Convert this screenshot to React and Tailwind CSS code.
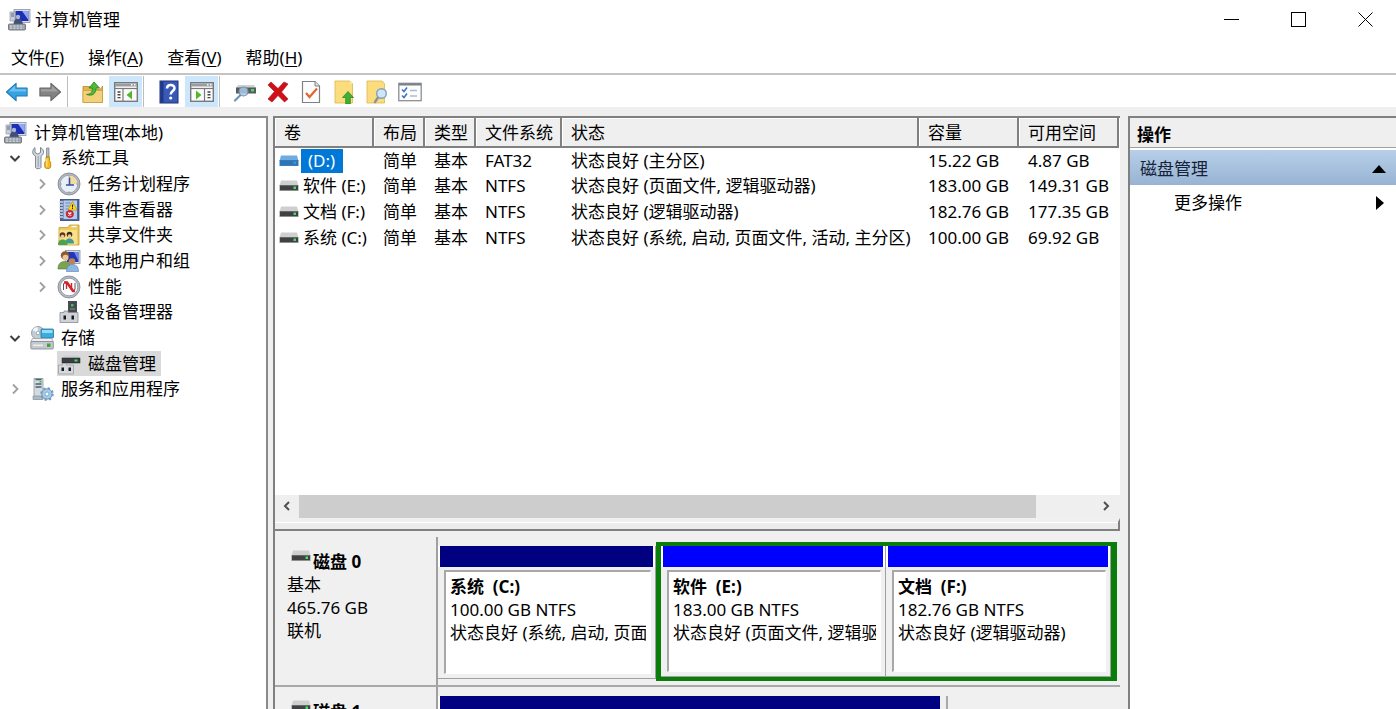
import { useState } from 'react';
import clsx from 'clsx';

/* ---------- icons ---------- */

const ComputerIcon = ({ size = 24 }) => (
  <svg width={size} height={size} viewBox="0 0 24 24" aria-hidden="true">
    <rect x="7" y="1.5" width="16" height="13" fill="#d9dde4" stroke="#8b95a5" strokeWidth=".8" />
    <rect x="8.5" y="3" width="13" height="10" fill="#1c2fb4" />
    <path d="M15 3h6.5v9z" fill="#8ea9f4" />
    <path d="M3 4h5v9H3z" fill="#c9ced6" stroke="#8f98a6" strokeWidth=".7" />
    <path d="M4 6h3M4 8h3" stroke="#5d6b86" />
    <path d="M6.500 16.500c.5-4 2.500-6.500 4.500-6.500s4.500 2.500 5 6.500z" fill="#3f507c" />
    <circle cx="11" cy="9" r="2.200" fill="#aab6d2" />
    <rect x="1.500" y="16" width="17" height="6" rx="1" fill="#9aa1ab" stroke="#5e6670" strokeWidth=".8" />
    <path d="M3 18h14M3 20.2h14" stroke="#e4e7ea" strokeDasharray="2 1.4" />
  </svg>
);

const ToolsIcon = () => (
  <svg width="24" height="24" viewBox="0 0 24 24" aria-hidden="true">
    <path d="M5 1.500v5l2.800 1.600L10.500 6.500v-5c2.400 1.300 3.200 3 3 5-.2 1.800-1.300 3-2.500 3.700V21c0 1-.9 1.700-2.800 1.700S5.500 22 5.500 21V10.200C3.500 9 2.500 7.500 2.800 5.500 3 3.700 3.700 2.400 5 1.500z" fill="#d3d8de" stroke="#7f8893" strokeWidth="1" />
    <path d="M8.200 10v11" stroke="#a0a8b1" strokeWidth="1.200" />
    <path d="M16.500 2h2.500v9h-2.500z" fill="#b8bec6" stroke="#707882" strokeWidth=".7" />
    <path d="M16 11h3.500v3.500l1.200 2v3.500c0 1.800-1 2.600-3 2.600s-3-.8-3-2.600v-3.500l1.300-2z" fill="#f6b91c" stroke="#b27b08" strokeWidth=".8" />
    <path d="M16.800 12.500v8" stroke="#ffe594" strokeWidth="1.200" />
  </svg>
);

const ClockIcon = () => (
  <svg width="24" height="24" viewBox="0 0 24 24" aria-hidden="true">
    <circle cx="12" cy="12" r="11" fill="#b3b8be" stroke="#7c838b" strokeWidth=".8" />
    <circle cx="12" cy="12" r="8.800" fill="#e9eff8" stroke="#8d959e" strokeWidth=".7" />
    <path d="M12 12V3.500A8.500 8.500 0 0 1 20.500 12z" fill="#f4dca0" />
    <path d="M12.500 5.500V13M9 13h8" fill="none" stroke="#35539b" strokeWidth="1.600" />
    <path d="M12 3.500v1M12 19.500v1M3.500 12h1M19.500 12h1" stroke="#6d7580" />
  </svg>
);

const EventIcon = () => (
  <svg width="24" height="24" viewBox="0 0 24 24" aria-hidden="true">
    <rect x="3.500" y="1.500" width="18.500" height="21" fill="#4c6ba8" stroke="#2d4677" strokeWidth=".8" />
    <rect x="6.500" y="2.500" width="13.500" height="18.500" fill="#b9c9e6" />
    <path d="M8.500 5h5M8.500 8h4M8.500 11h3M8.500 14h2" stroke="#7389ba" />
    <path d="M2 4h4M2 7h4M2 10h4M2 13h4M2 16h4M2 19h4" stroke="#d5dae2" strokeWidth="1.400" />
    <path d="M15.500 3.500l4.500 8.500h-9z" fill="#ffdd24" stroke="#b79400" strokeWidth=".7" />
    <path d="M15.500 6.500v3M15.500 10v1" stroke="#222" strokeWidth="1.100" />
    <circle cx="12.800" cy="16" r="3.600" fill="#dc2640" stroke="#8f1111" strokeWidth=".6" />
    <path d="M11.300 14.500l3 3M14.300 14.500l-3 3" stroke="#fff" strokeWidth="1.100" />
  </svg>
);

const SharedFolderIcon = () => (
  <svg width="24" height="24" viewBox="0 0 24 24" aria-hidden="true">
    <path d="M2 4.500h9l1.500-2.500H22v20H2z" fill="#eec95c" stroke="#c49a31" strokeWidth=".8" />
    <path d="M2.500 7h17.500v14.500H2.500z" fill="#fae08c" />
    <path d="M14.500 3.500h5" stroke="#fff" strokeWidth="1.400" />
    <circle cx="5.500" cy="12" r="2.800" fill="#5f3a1e" />
    <circle cx="12.500" cy="11.500" r="2.800" fill="#3f2a1b" />
    <circle cx="5.500" cy="13.500" r="1.800" fill="#f1c79c" />
    <circle cx="12.500" cy="13" r="1.800" fill="#f1c79c" />
    <path d="M8 20.500c0-3.500 2-5 4.500-5s4.500 1.500 4.500 5z" fill="#3f9d8f" />
    <path d="M1 22c0-4 2-5.500 4.500-5.500s5 1.500 5 5.500z" fill="#4da34b" />
  </svg>
);

const UsersIcon = () => (
  <svg width="24" height="24" viewBox="0 0 24 24" aria-hidden="true">
    <rect x="8.500" y="1.500" width="14.500" height="13" fill="#d3d8e2" stroke="#8791a5" strokeWidth=".8" />
    <rect x="10" y="3" width="11.500" height="10" fill="#2436b6" />
    <path d="M17 3h4.500v9z" fill="#7289e4" />
    <circle cx="8" cy="6.500" r="4.200" fill="#8a5a2b" />
    <circle cx="8.500" cy="8.800" r="3" fill="#f0c49a" />
    <path d="M1 20c0-5.500 3-7.500 6.500-7.500s6.500 2 6.500 7.500z" fill="#7aa352" stroke="#527a31" strokeWidth=".6" />
    <circle cx="15" cy="12.500" r="3.300" fill="#b88458" />
    <path d="M9.500 22.500c0-5 2.500-7 6-7s6 2 6 7z" fill="#8bb6e6" stroke="#5580b4" strokeWidth=".6" />
  </svg>
);

const PerformanceIcon = () => (
  <svg width="24" height="24" viewBox="0 0 24 24" aria-hidden="true">
    <circle cx="12" cy="12" r="11" fill="#b6bbc1" stroke="#7c838b" strokeWidth=".8" />
    <circle cx="12" cy="12" r="8.800" fill="#fff" stroke="#8a9199" strokeWidth=".8" />
    <path d="M6.500 15V9l2-2.500M18 8v6l-1.500 2.500" fill="none" stroke="#555" strokeWidth="1" />
    <path d="M7 7.500h3l6 8.500h2" fill="none" stroke="#d6222a" strokeWidth="2.600" />
    <path d="M9.500 8v6M14.500 8v7" stroke="#d6222a" strokeWidth="1.400" />
  </svg>
);

const DeviceIcon = () => (
  <svg width="24" height="24" viewBox="0 0 24 24" aria-hidden="true">
    <rect x="11.500" y="1.500" width="8" height="11" fill="#454a50" stroke="#25292d" strokeWidth=".7" />
    <rect x="14" y="4" width="2.500" height="2.500" fill="#52ba5c" />
    <path d="M13 9h5" stroke="#8e949b" />
    <path d="M3 12.500h4V11h4v1.500h10v10H3z" fill="#cfd3d8" stroke="#868d95" strokeWidth=".8" />
    <rect x="6.500" y="15.500" width="2.500" height="4" fill="#17191c" />
    <rect x="14.500" y="15.500" width="2.500" height="4" fill="#17191c" />
  </svg>
);

const StorageIcon = () => (
  <svg width="24" height="24" viewBox="0 0 24 24" aria-hidden="true">
    <circle cx="8" cy="7" r="6.500" fill="#c2ccd4" stroke="#858f99" strokeWidth=".8" />
    <path d="M8 7L2.500 4a6 6 0 0 1 5-3z" fill="#f5f8fa" />
    <circle cx="8" cy="7" r="1.800" fill="#fff" stroke="#8a949d" strokeWidth=".7" />
    <rect x="11" y="3" width="12.500" height="9" rx="1" fill="#3bace0" stroke="#1e739f" strokeWidth=".8" />
    <path d="M12 4h10.500v3H12z" fill="#96dbf6" />
    <path d="M2.500 12.500h19l2 3.500H.8z" fill="#eef0f2" stroke="#9198a0" strokeWidth=".7" />
    <rect x=".8" y="15.500" width="22.500" height="7.500" rx="1" fill="#c4c9ce" stroke="#7d858d" strokeWidth=".8" />
    <rect x="17" y="17.500" width="3.500" height="3.500" fill="#48a23a" />
    <path d="M3 19.300h10" stroke="#edf0f2" strokeWidth="1.500" />
  </svg>
);

const DiskManagerIcon = () => (
  <svg width="24" height="24" viewBox="0 0 24 24" aria-hidden="true">
    <path d="M7 3.500h14l2 3H5z" fill="#ccd0d4" />
    <rect x="5" y="6" width="18" height="5" fill="#3a3e42" stroke="#222" strokeWidth=".5" />
    <rect x="17.500" y="7.500" width="3" height="2" fill="#45dc5b" />
    <path d="M1.500 13h4v-1.500h4V13h7v9h-15z" fill="#d6d9dc" stroke="#9a9fa5" strokeWidth=".8" />
    <rect x="4.500" y="15.500" width="2.500" height="3.500" fill="#17191c" />
    <rect x="11.500" y="15.500" width="2.500" height="3.500" fill="#17191c" />
  </svg>
);

const ServicesIcon = () => (
  <svg width="24" height="24" viewBox="0 0 24 24" aria-hidden="true">
    <path d="M4 1.500h9v20.500H4z" fill="#d3dbe1" stroke="#8d9aa5" strokeWidth=".8" />
    <path d="M5.500 2.500h6M5.500 7h6M5.500 10h6" stroke="#4d6070" strokeWidth="1.300" />
    <rect x="9.500" y="4" width="2" height="1.500" fill="#39b54a" />
    <path d="M3 19h10v3.500H3z" fill="#aeb9c2" stroke="#7d8b97" strokeWidth=".6" />
    <circle cx="17" cy="17" r="5.200" fill="#a9cbe7" stroke="#6f9cc1" strokeWidth="1" />
    <circle cx="17" cy="17" r="5.800" fill="none" stroke="#6f9cc1" strokeWidth="2" strokeDasharray="2.300 2.255" />
    <circle cx="17" cy="17" r="2" fill="#fff" stroke="#6f9cc1" strokeWidth=".8" />
  </svg>
);

const DriveIcon = ({ selected }) => (
  <svg width="20" height="12" viewBox="0 0 20 12" className="shrink-0" aria-hidden="true">
    <path d="M2 .5h16L19.500 6H.5z" fill={selected ? '#6fabe0' : '#cfcfcf'} />
    <rect x=".5" y="5" width="19" height="6" fill={selected ? '#3a7fc0' : '#8e9092'} />
    <rect x="1" y="5.500" width="18" height="4.500" fill={selected ? '#2f75b5' : '#3f4143'} />
    <rect x="14.500" y="6.500" width="2.500" height="2.500" fill={selected ? '#4590d0' : '#3fe065'} />
  </svg>
);

const Arrow = ({ fill, stroke, shine, flip }) => (
  <svg width="24" height="22" viewBox="0 0 26 24" className={clsx(flip && '-scale-x-100')} aria-hidden="true">
    <path d="M1.500 12L12 2.500v5.200h12v8.600H12v5.200z" fill={fill} stroke={stroke} strokeWidth="1.200" strokeLinejoin="round" />
    <path d="M4 11.500L11 5v4h12v2.500z" fill={shine} />
  </svg>
);

const FolderUpIcon = () => (
  <svg width="24" height="24" viewBox="0 0 24 24" aria-hidden="true">
    <path d="M2 6.500h7l2 2.500h9l1.500-3V22.500H2z" fill="#e3b54d" stroke="#b98a26" strokeWidth=".8" />
    <path d="M2 10.500h19.500v12H2z" fill="#f3d07a" stroke="#c99d3b" strokeWidth=".7" />
    <path d="M5.500 14.500c5-.5 6-3 6-6.500H8L13 2l5.500 6H15c-.2 6-3.500 8.500-9.500 6.500z" fill="#4cbb3c" stroke="#258320" strokeWidth=".8" />
  </svg>
);

const PaneIcon = ({ right }) => (
  <svg width="24" height="20" viewBox="0 0 24 20" aria-hidden="true">
    <rect x=".7" y=".7" width="22.600" height="18.600" fill="#fbfbfb" stroke="#77797c" strokeWidth="1.400" />
    <path d="M1 3h22" stroke="#9a9da0" strokeWidth="3" />
    <path d="M1 6.500h22" stroke="#77797c" strokeWidth="1.200" />
    <path d="M17 2.800h1.500M20 2.800h1.500" stroke="#fff" strokeWidth="1.400" />
    {right ? (
      <>
        <path d="M14.500 7v12" stroke="#77797c" strokeWidth="1.200" />
        <path d="M17.500 10h3M17.500 12.800h3M17.500 15.600h3" stroke="#404347" strokeWidth="1.400" />
        <path d="M6 8.500l5.500 4.500L6 17.500z" fill="#53b62b" />
      </>
    ) : (
      <>
        <path d="M9 7v12" stroke="#77797c" strokeWidth="1.200" />
        <path d="M3.500 10h3M3.500 12.800h3M3.500 15.600h3" stroke="#404347" strokeWidth="1.400" />
        <path d="M18 8.500L12.500 13l5.500 4.500z" fill="#53b62b" />
      </>
    )}
  </svg>
);

// the question mark is a stroked curve with a dot
const HelpIcon = () => (
  <svg width="20" height="24" viewBox="0 0 20 24" aria-hidden="true">
    <rect x="1" y="1" width="18" height="22" fill="#3859b8" stroke="#1d3277" strokeWidth="1" />
    <path d="M1.500 1.500h3v21h-3z" fill="#203986" />
    <path d="M8 8.500c0-4.500 7.500-4.500 7.500-.3 0 2.800-3.800 3-3.800 6.300" fill="none" stroke="#fff" strokeWidth="2.500" />
    <circle cx="11.700" cy="18" r="1.600" fill="#fff" />
  </svg>
);

const ScanDiskIcon = () => (
  <svg width="24" height="20" viewBox="0 0 24 20" aria-hidden="true">
    <path d="M5 3h16l2 3H3z" fill="#cdd1d4" />
    <rect x="3" y="5.500" width="20" height="6" fill="#565b5f" />
    <rect x="18" y="7" width="3" height="2.500" fill="#43dd5f" />
    <path d="M7.500 13L2 18.500" stroke="#7391b2" strokeWidth="2.200" strokeLinecap="round" />
    <circle cx="10.500" cy="9.500" r="4.500" fill="#aacbe5" fillOpacity=".85" stroke="#7591ab" strokeWidth="1.200" />
  </svg>
);

const DeleteIcon = () => (
  <svg width="22" height="22" viewBox="0 0 22 22" aria-hidden="true">
    <path d="M4 1l7 6.500L17 1l4 2-6.500 8 6.500 7-3.500 3-6.500-6.500L5 21l-4-3 6.500-7.500L1 4z" fill="#cf1019" stroke="#a80b12" strokeWidth=".6" />
  </svg>
);

const CheckDocIcon = () => (
  <svg width="20" height="24" viewBox="0 0 20 24" aria-hidden="true">
    <path d="M1.500 1.500H14L18.500 6v16.500h-17z" fill="#fdfdfd" stroke="#7e8185" strokeWidth="1.200" />
    <path d="M14 1.500V6h4.500" fill="#e2e4e6" stroke="#7e8185" />
    <path d="M5 13l3.500 4L16 8.500" fill="none" stroke="#e4652d" strokeWidth="2.200" />
  </svg>
);

const NoteUpIcon = () => (
  <svg width="20" height="24" viewBox="0 0 20 24" aria-hidden="true">
    <path d="M1 1h15l2.500 2.500V23H1z" fill="#fbdd7d" stroke="#dcb650" strokeWidth=".8" />
    <path d="M16 1v2.500h2.500z" fill="#fff3c6" />
    <path d="M14 11.500l5.500 6h-3.200V24h-4.600v-6.500H8.500z" fill="#3fb034" stroke="#27831f" strokeWidth=".7" />
  </svg>
);

const NoteSearchIcon = () => (
  <svg width="22" height="24" viewBox="0 0 22 24" aria-hidden="true">
    <path d="M1 1h15l2.500 2.500V23H1z" fill="#fbdd7d" stroke="#dcb650" strokeWidth=".8" />
    <path d="M12 17.500L9 22" stroke="#8d9198" strokeWidth="2.400" strokeLinecap="round" />
    <circle cx="15.500" cy="13.500" r="4.800" fill="#cfe6f6" stroke="#7fa0bd" strokeWidth="1.400" />
  </svg>
);

const TaskListIcon = () => (
  <svg width="24" height="20" viewBox="0 0 24 20" aria-hidden="true">
    <rect x=".8" y="1.300" width="22.400" height="17.400" fill="#fdfdfd" stroke="#8b8f93" strokeWidth="1.300" />
    <path d="M1 2.500h22" stroke="#7c8084" strokeWidth="2" />
    <path d="M4 7.500l2 2L9 5.500M4 13.500l2 2 3-4" fill="none" stroke="#3177c8" strokeWidth="1.500" />
    <path d="M12 8.500h7M12 14h7" stroke="#a9bdd4" strokeWidth="1.500" />
  </svg>
);

const Chevron = ({ open }) => (
  <svg width="12" height="12" viewBox="0 0 12 12" fill="none" aria-hidden="true">
    {open ? (
      <path d="M1.500 4L6 8.500 10.500 4" stroke="#404040" strokeWidth="2" />
    ) : (
      <path d="M4 1.500L8.500 6 4 10.500" stroke="#a0a0a0" strokeWidth="1.800" />
    )}
  </svg>
);

/* ---------- data ---------- */

const menus = [
  ['文件', 'F'],
  ['操作', 'A'],
  ['查看', 'V'],
  ['帮助', 'H'],
];

const toolbar = [
  { label: '后退', icon: <Arrow fill="#35a3e2" stroke="#2079b5" shine="#6fc0ee" /> },
  { label: '前进', icon: <Arrow fill="#838383" stroke="#686868" shine="#a0a0a0" flip /> },
  null,
  { label: '上一级', icon: <FolderUpIcon /> },
  { label: '显示/隐藏控制台树', icon: <PaneIcon />, active: true },
  null,
  { label: '帮助', icon: <HelpIcon /> },
  { label: '显示/隐藏操作窗格', icon: <PaneIcon right />, active: true },
  null,
  { label: '重新扫描磁盘', icon: <ScanDiskIcon /> },
  { label: '删除', icon: <DeleteIcon /> },
  { label: '属性', icon: <CheckDocIcon /> },
  { label: '打开', icon: <NoteUpIcon /> },
  { label: '浏览', icon: <NoteSearchIcon /> },
  { label: '设置', icon: <TaskListIcon /> },
];

const tree = [
  { label: '计算机管理(本地)', level: 0, icon: <ComputerIcon /> },
  { label: '系统工具', level: 1, icon: <ToolsIcon />, open: true },
  { label: '任务计划程序', level: 2, icon: <ClockIcon />, open: false },
  { label: '事件查看器', level: 2, icon: <EventIcon />, open: false },
  { label: '共享文件夹', level: 2, icon: <SharedFolderIcon />, open: false },
  { label: '本地用户和组', level: 2, icon: <UsersIcon />, open: false },
  { label: '性能', level: 2, icon: <PerformanceIcon />, open: false },
  { label: '设备管理器', level: 2, icon: <DeviceIcon /> },
  { label: '存储', level: 1, icon: <StorageIcon />, open: true },
  { label: '磁盘管理', level: 2, icon: <DiskManagerIcon /> },
  { label: '服务和应用程序', level: 1, icon: <ServicesIcon />, open: false },
];

const columns = [
  { label: '卷', width: 'w-[98px]' },
  { label: '布局', width: 'w-[51px]' },
  { label: '类型', width: 'w-[51px]' },
  { label: '文件系统', width: 'w-[86px]' },
  { label: '状态', width: 'w-auto' },
  { label: '容量', width: 'w-[100px]' },
  { label: '可用空间', width: 'w-[100px]' },
];

const volumes = [
  ['(D:)', '简单', '基本', 'FAT32', '状态良好 (主分区)', '15.22 GB', '4.87 GB'],
  ['软件 (E:)', '简单', '基本', 'NTFS', '状态良好 (页面文件, 逻辑驱动器)', '183.00 GB', '149.31 GB'],
  ['文档 (F:)', '简单', '基本', 'NTFS', '状态良好 (逻辑驱动器)', '182.76 GB', '177.35 GB'],
  ['系统 (C:)', '简单', '基本', 'NTFS', '状态良好 (系统, 启动, 页面文件, 活动, 主分区)', '100.00 GB', '69.92 GB'],
];

/* ---------- parts ---------- */

const TitleBar = () => (
  <header className="flex h-[39px] shrink-0 items-center bg-white pl-[7px]">
    <ComputerIcon />
    <h1 className="flex-1 pl-1">计算机管理</h1>
    <div className="flex h-full gap-[5px]">
      <button type="button" aria-label="最小化" className="flex w-[62px] items-center justify-center">
        <svg width="15" height="15" viewBox="0 0 15 15"><path d="M0 7.500h15" stroke="#000" /></svg>
      </button>
      <button type="button" aria-label="最大化" className="flex w-[62px] items-center justify-center">
        <svg width="15" height="15" viewBox="0 0 15 15"><rect x=".5" y=".5" width="14" height="14" fill="none" stroke="#000" /></svg>
      </button>
      <button type="button" aria-label="关闭" className="flex w-[62px] items-center justify-center">
        <svg width="15" height="15" viewBox="0 0 15 15"><path d="M.5.5l14 14M14.500.5l-14 14" stroke="#000" /></svg>
      </button>
    </div>
  </header>
);

const MenuBar = () => (
  <nav className="flex h-[34px] shrink-0 items-center gap-6 bg-white pt-1 pl-[11px]">
    {menus.map(([label, key]) => (
      <button key={key} type="button">
        {label}(<span className="underline underline-offset-2">{key}</span>)
      </button>
    ))}
  </nav>
);

const Toolbar = () => (
  <div role="toolbar" className="flex h-[34px] shrink-0 border-t-2 border-[#c4c4c4] bg-white pt-px">
    {toolbar.map((item, i) =>
      item ? (
        <button
          key={item.label}
          type="button"
          aria-label={item.label}
          className={clsx('flex w-[33px] items-center justify-center', item.active && 'bg-[#cce6fb]')}
        >
          {item.icon}
        </button>
      ) : (
        <span key={i} className="mr-2 ml-px w-px bg-[#bdbdbd]" />
      )
    )}
  </div>
);

const TreeItem = ({ item, selected, onSelect }) => (
  <li className={clsx('flex flex-1 items-center', item.level === 0 && 'pl-[3px]', item.level === 1 && 'pl-1', item.level === 2 && 'pl-[31px]')}>
    {item.level > 0 && (
      <span className="flex w-[26px] justify-center pr-1">
        {item.open !== undefined && <Chevron open={item.open} />}
      </span>
    )}
    <button
      type="button"
      onClick={onSelect}
      className={clsx('flex h-full items-center pr-[5px]', selected && 'bg-[#d9d9d9]')}
    >
      <span className="flex w-6 justify-center">{item.icon}</span>
      <span className="pl-[7px]">{item.label}</span>
    </button>
  </li>
);

const VolumeTable = () => (
  <table className="w-full table-fixed border-collapse text-left whitespace-nowrap">
    <thead>
      <tr className="h-[29px] bg-[#efefef]">
        {columns.map((col) => (
          <th
            key={col.label}
            className={clsx('border-r-2 border-b-2 border-[#808080] p-0 pt-[2px] pl-[9px] font-normal shadow-[inset_1px_1px_0_#fff]', col.width)}
          >
            {col.label}
          </th>
        ))}
      </tr>
    </thead>
    <tbody>
      {volumes.map(([name, ...rest], i) => (
        <tr key={name} className="h-[26px]">
          <td className="p-0 pl-1">
            <span className="flex items-center">
              <DriveIcon selected={i === 0} />
              <span className={i === 0 ? 'ml-[2px] bg-[#0078d7] pr-2 pl-[7px] text-white' : 'pl-1'}>{name}</span>
            </span>
          </td>
          {rest.map((value, j) => (
            <td key={j} className="p-0 pl-[10px]">{value}</td>
          ))}
        </tr>
      ))}
    </tbody>
  </table>
);

const ScrollBar = () => (
  <div className="flex h-[23px] shrink-0 items-stretch bg-[#efefef]">
    <button type="button" aria-label="向左滚动" className="flex w-6 items-center justify-center">
      <svg width="8" height="10" viewBox="0 0 8 10" fill="none"><path d="M6 1L2 5l4 4" stroke="#505050" strokeWidth="2" /></svg>
    </button>
    <div className="flex-1">
      <div className="h-full w-[93%] bg-[#cdcdcd]" />
    </div>
    <button type="button" aria-label="向右滚动" className="flex w-7 items-center justify-center">
      <svg width="8" height="10" viewBox="0 0 8 10" fill="none"><path d="M2 1l4 4-4 4" stroke="#505050" strokeWidth="2" /></svg>
    </button>
  </div>
);

const Partition = ({ name, size, status, logical }) => (
  <div className="flex h-full min-w-0 flex-1 flex-col border-r border-b border-[#a0a0a0] bg-[#f0f0f0]">
    <div className={clsx('h-[21px] shrink-0 border-r-2 border-l-2 border-white', logical ? 'bg-[#0000ff]' : 'bg-[#000080]')} />
    <div className="mt-[3px] mr-1 mb-1 ml-[6px] flex-1 border border-t-2 border-l-2 border-[#a8a8a8] border-r-white border-b-white bg-white pt-[3px] pr-1 pl-1 leading-[23px]">
      <div className="overflow-hidden whitespace-nowrap">
        <p className="font-bold whitespace-pre">{name}</p>
        <p>{size}</p>
        <p>{status}</p>
      </div>
    </div>
  </div>
);

const DiskLabel = ({ name, children }) => (
  <div className="w-[163px] shrink-0 border-r-2 border-[#a0a0a0] bg-[#f0f0f0] pt-3 pl-3 leading-[23px]">
    <h2 className="flex gap-[2px] pt-px pl-1 font-bold">
      <DriveIcon /> {name}
    </h2>
    {children}
  </div>
);

const DiskMap = () => (
  <section className="flex min-h-0 flex-1 flex-col overflow-hidden bg-[#f0f0f0] pt-[6px]">
    <div className="flex h-[150px] shrink-0 border-b-2 border-[#a8a8a8]">
      <DiskLabel name="磁盘 0">
        <p>基本</p>
        <p>465.76 GB</p>
        <p>联机</p>
      </DiskLabel>
      <div className="flex min-w-0 flex-1 pt-[5px] pr-[3px] pb-1">
        <div className="flex min-w-0 flex-[218] pt-1 pb-[2px]">
          <Partition name="系统  (C:)" size="100.00 GB NTFS" status="状态良好 (系统, 启动, 页面" />
        </div>
        <div className="flex min-w-0 flex-[450] border-y-4 border-r-[6px] border-l-[5px] border-[#0b7d0b]">
          <Partition name="软件  (E:)" size="183.00 GB NTFS" status="状态良好 (页面文件, 逻辑驱" logical />
          <Partition name="文档  (F:)" size="182.76 GB NTFS" status="状态良好 (逻辑驱动器)" logical />
        </div>
      </div>
    </div>
    <div className="flex h-[150px] shrink-0">
      <DiskLabel name="磁盘 1" />
      <div className="flex min-w-0 flex-1 pt-[9px]">
        <div className="flex-[508] border-r-2 border-[#a8a8a8] pr-[6px]">
          <div className="h-[21px] border-l-2 border-white bg-[#000080]" />
        </div>
        <div className="flex-[174]" />
      </div>
    </div>
  </section>
);

const ActionsPane = () => (
  <aside className="w-[268px] shrink-0 border-t-2 border-l-2 border-[#808080] bg-white">
    <h2 className="flex h-[30px] items-center border-b border-[#a0a0a0] bg-[#efefef] pt-1 pl-[7px] font-bold">操作</h2>
    <button
      type="button"
      className="mt-[2px] flex h-[35px] w-full items-center justify-between bg-linear-to-b from-[#b7cfe8] to-[#98b3d4] pt-[2px] pr-[10px] pl-[10px] text-[#152238]"
    >
      磁盘管理
      <svg width="14" height="8" viewBox="0 0 14 8"><path d="M7 0l7 8H0z" fill="#000" /></svg>
    </button>
    <button type="button" className="flex h-[34px] w-full items-center justify-between pt-[2px] pr-3 pl-11">
      更多操作
      <svg width="8" height="14" viewBox="0 0 8 14"><path d="M0 0l8 7-8 7z" fill="#000" /></svg>
    </button>
  </aside>
);

export default function App() {
  const [selected, setSelected] = useState('磁盘管理');

  return (
    <div className="flex h-screen flex-col overflow-hidden bg-[#efefef] font-['Noto_Sans','Noto_Sans_CJK_SC',sans-serif] text-[17px] leading-6 text-black">
      <TitleBar />
      <MenuBar />
      <Toolbar />

      <main className="flex min-h-0 flex-1 pt-[9px]">
        {/* Console tree */}
        <nav className="w-[268px] shrink-0 border-t-2 border-r-2 border-[#8a8a8a] bg-white">
          <ul className="flex h-[284px] flex-col pt-[2px]">
            {tree.map((item) => (
              <TreeItem
                key={item.label}
                item={item}
                selected={item.label === selected}
                onSelect={() => setSelected(item.label)}
              />
            ))}
          </ul>
        </nav>

        {/* Volumes and disks */}
        <div className="ml-[5px] flex min-w-0 flex-1 flex-col border-t-2 border-l-2 border-[#808080]">
          <section className="flex h-[calc(70%-1px)] shrink-0 flex-col border-b-2 border-[#808080] bg-white">
            <div className="min-h-0 flex-1 overflow-hidden pr-px">
              <VolumeTable />
            </div>
            <ScrollBar />
            <div className="h-[11px] shrink-0 border-t-4 border-r-2 border-[#f0f0f0] border-r-[#808080] bg-[#ececec] shadow-[inset_0_1px_0_#fff]" />
          </section>
          <DiskMap />
        </div>

        <div className="w-2 shrink-0" />
        <ActionsPane />
      </main>
    </div>
  );
}
